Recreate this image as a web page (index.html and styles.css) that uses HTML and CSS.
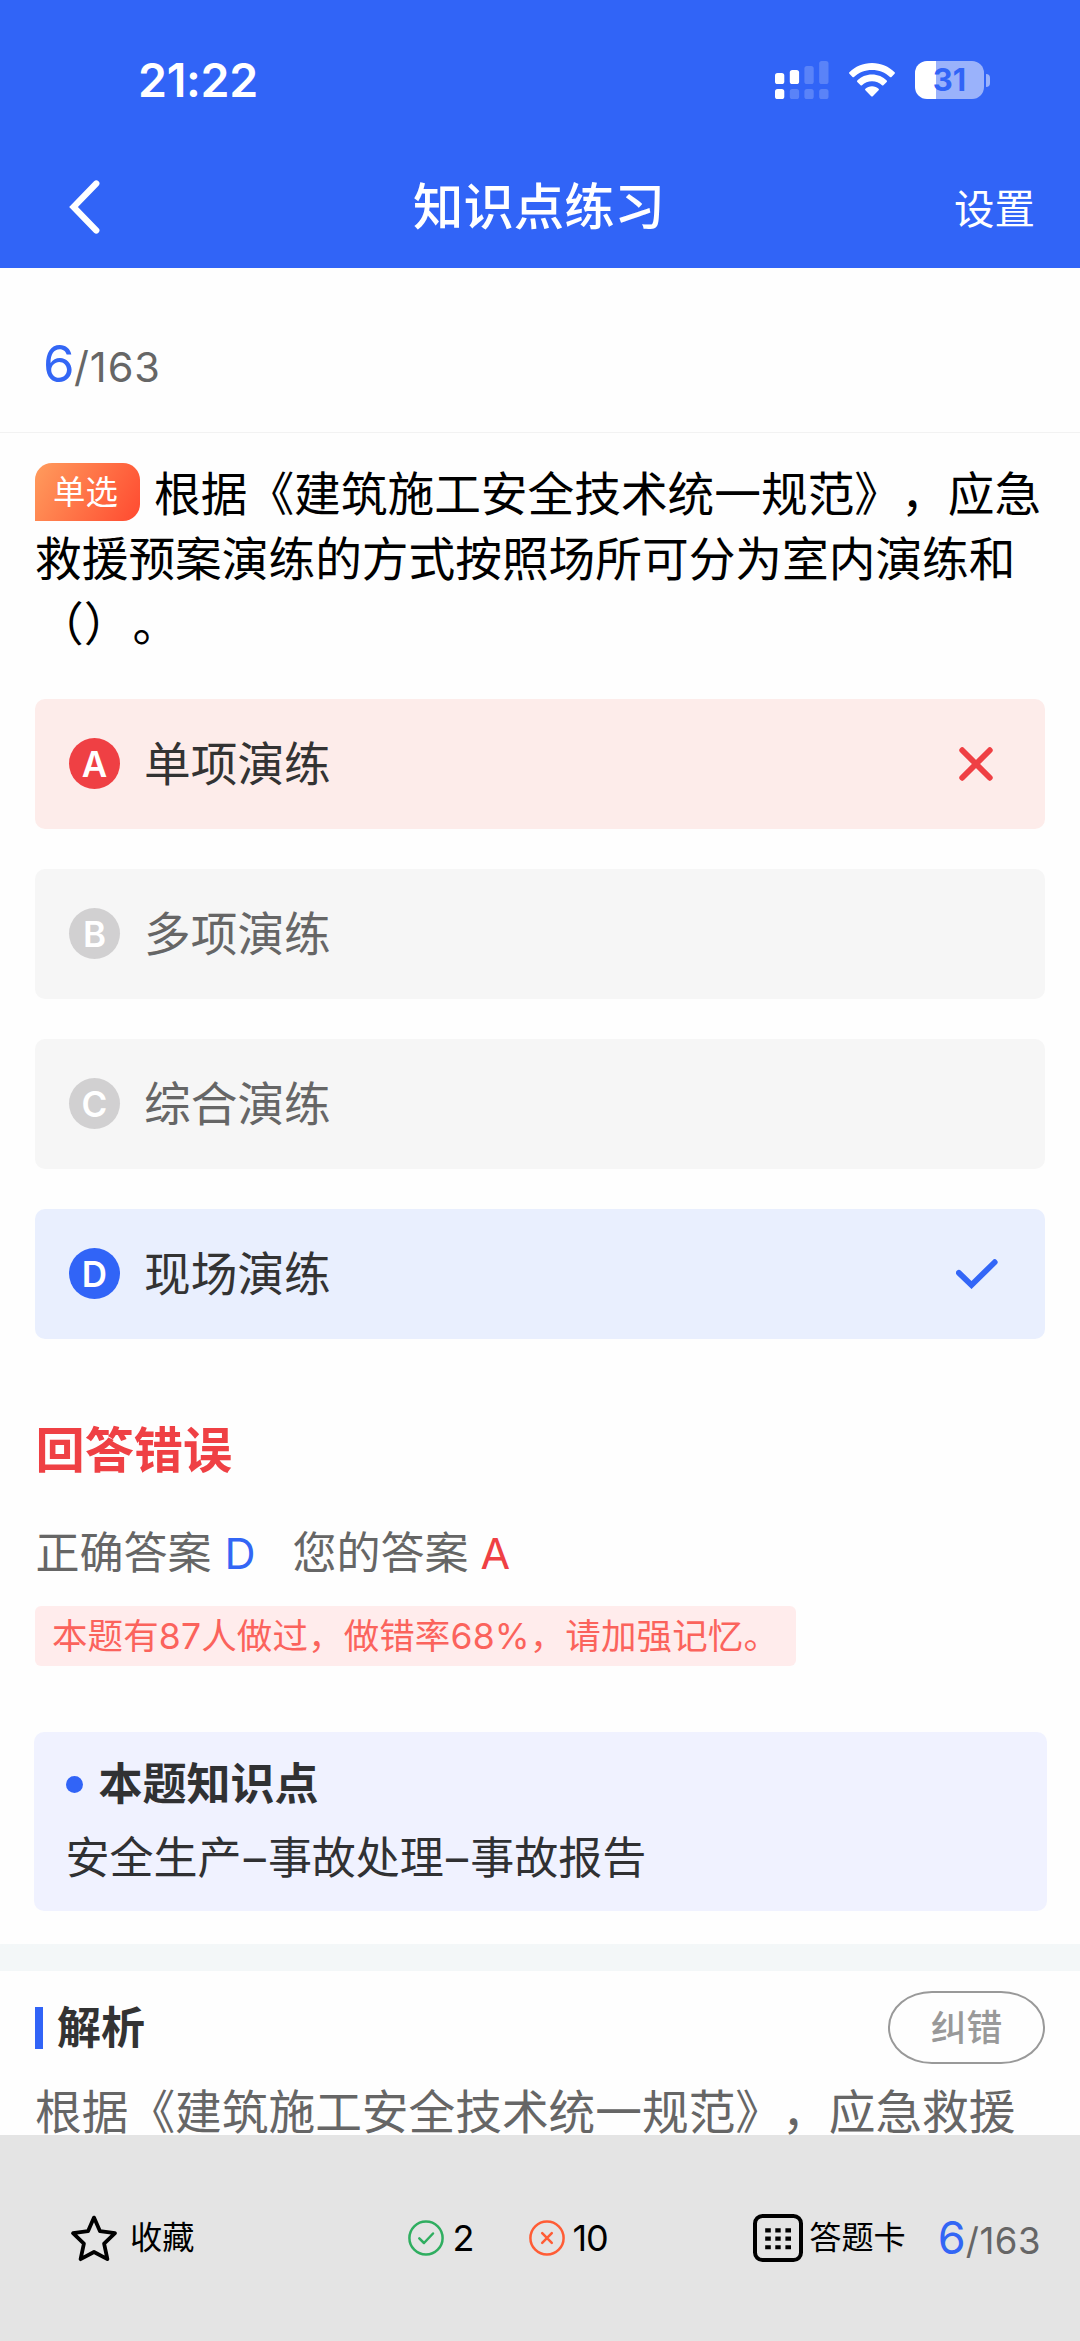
FILE: index.html
```html
<!DOCTYPE html>
<html lang="zh-CN">
<head>
<meta charset="utf-8">
<title>知识点练习</title>
<link rel="stylesheet" href="styles.css">
</head>
<body>
<div class="app">
  <header class="header">
    <div class="status">
      <span class="clock">21:22</span>
      <div class="status-icons">
        <svg class="signal" width="54" height="38" viewBox="0 0 54 38" fill="#fff">
          <rect x="0" y="12" width="9.3" height="11" rx="2.6"/>
          <rect x="14.8" y="9" width="9.3" height="14" rx="2.6"/>
          <g opacity=".2">
            <rect x="29.4" y="5" width="9.3" height="18" rx="2.6"/>
            <rect x="44.2" y="0" width="9.3" height="23" rx="2.6"/>
            <rect x="14.8" y="28" width="9.3" height="10" rx="2.6"/>
            <rect x="29.4" y="28" width="9.3" height="10" rx="2.6"/>
            <rect x="44.2" y="28" width="9.3" height="10" rx="2.6"/>
          </g>
          <rect x="0" y="28" width="9.3" height="10" rx="2.6"/>
        </svg>
        <svg class="wifi" width="46" height="34" viewBox="0 0 46 34" fill="#fff">
          <path d="M23 0C14 0 6 3.600.4 9.300Q-.3 10 .4 10.700L3.500 13.900Q4.200 14.600 5 13.900C9.700 9.500 16 6.900 23 6.900S36.300 9.500 41 13.900Q41.800 14.600 42.500 13.900L45.600 10.700Q46.300 10 45.600 9.300C40 3.600 32 0 23 0Z"/>
          <path d="M23 11.500C17.200 11.500 12 13.800 8.300 17.500Q7.600 18.200 8.300 18.900L11.600 22.200Q12.300 22.800 13 22.200C15.600 19.700 19.100 18.200 23 18.200S30.400 19.700 33 22.200Q33.700 22.800 34.400 22.200L37.700 18.900Q38.400 18.200 37.700 17.500C34 13.800 28.800 11.500 23 11.500Z"/>
          <path d="M23 23.200C20.400 23.200 18.100 24.200 16.400 25.700Q15.600 26.500 16.400 27.300L22.200 33.200Q23 34 23.800 33.200L29.600 27.300Q30.400 26.500 29.600 25.700C27.900 24.200 25.600 23.200 23 23.200Z"/>
        </svg>
        <div class="battery"><span class="battery-body">31</span><i class="battery-cap"></i></div>
      </div>
    </div>
    <nav class="nav">
      <svg class="back" width="32" height="54" viewBox="0 0 32 54" fill="none" stroke="#fff" stroke-width="6.200" stroke-linecap="round" stroke-linejoin="miter"><path d="M27.300 3.500 4.500 27l22.800 23.500"/></svg>
      <h1 class="title">知识点练习</h1>
      <span class="settings">设置</span>
    </nav>
  </header>

  <main class="content">
    <div class="progress"><b>6</b><span>/163</span></div>

    <section class="quiz">
      <p class="question"><span class="tag">单选</span>根据《建筑施工安全技术统一规范》，应急救援预案演练的方式按照场所可分为室内演练和<span class="blank">（）</span>。</p>
      <ul class="options">
        <li class="option wrong"><span class="letter">A</span><span class="label">单项演练</span>
          <svg class="mark-x" width="34" height="34" viewBox="0 0 34 34" fill="none" stroke="#ef4044" stroke-width="5.800" stroke-linecap="round"><path d="M3.200 3.200 30.800 30.800M30.800 3.200 3.200 30.800"/></svg>
        </li>
        <li class="option"><span class="letter">B</span><span class="label">多项演练</span></li>
        <li class="option"><span class="letter">C</span><span class="label">综合演练</span></li>
        <li class="option right"><span class="letter">D</span><span class="label">现场演练</span>
          <svg class="mark-v" width="42" height="30" viewBox="0 0 42 30" fill="none" stroke="#3366f7" stroke-width="5.800" stroke-linecap="round"><path d="M2.900 13.800 15.500 26 38.700 3.200"/></svg>
        </li>
      </ul>
    </section>

    <section class="result">
      <h2 class="verdict">回答错误</h2>
      <p class="answers"><span>正确答案</span><span class="ans good">D</span><span class="yours">您的答案</span><span class="ans bad">A</span></p>
      <p class="tip">本题有87人做过，做错率68%，请加强记忆。</p>
      <div class="knowledge">
        <h3 class="knowledge-title"><i class="dot"></i>本题知识点</h3>
        <p class="knowledge-path">安全生产<span class="dash">–</span>事故处理<span class="dash">–</span>事故报告</p>
      </div>
    </section>

    <section class="analysis">
      <div class="analysis-head">
        <h3 class="analysis-title">解析</h3>
        <span class="report">纠错</span>
      </div>
      <p class="analysis-text">根据《建筑施工安全技术统一规范》，应急救援</p>
    </section>
  </main>

  <footer class="footer">
    <div class="fav">
      <svg width="48" height="48" viewBox="0 0 48 48" fill="none" stroke="#000" stroke-width="3.800" stroke-linejoin="round"><path d="M24 3.600 30 17.200 45 19.200 34.100 29.700 37.400 45.200 24 38 10.600 45.200 13.900 29.700 3 19.200 18 17.200Z"/></svg>
      <span>收藏</span>
    </div>
    <div class="counts">
      <svg width="36" height="36" viewBox="0 0 36 36" fill="none" stroke="#2fae60" stroke-width="2.500" stroke-linecap="round" stroke-linejoin="round"><circle cx="18" cy="18" r="16.600"/><path d="M11.300 18.300 16 23 25 13.500"/></svg>
      <span class="count-ok">2</span>
      <svg width="36" height="36" viewBox="0 0 36 36" fill="none" stroke="#ff5c35" stroke-width="2.500" stroke-linecap="round"><circle cx="18" cy="18" r="16.600"/><path d="M13.200 13.200 22.800 22.800M22.800 13.200 13.200 22.800"/></svg>
      <span class="count-bad">10</span>
    </div>
    <div class="sheet">
      <svg width="50" height="48" viewBox="0 0 50 48"><rect x="2" y="2" width="46" height="44" rx="7.500" fill="none" stroke="#000" stroke-width="4"/><path d="M12.200 14.200h5.600v4.300h-5.600zM22.300 14.200h5.400v4.300h-5.400zM32.400 14.200H38v4.300h-5.600zM12.200 22.600h5.600v4.100h-5.600zM22.300 22.600h5.400v4.100h-5.400zM32.400 22.600H38v4.100h-5.600zM12.200 31.200h5.600v4.100h-5.600zM22.300 31.200h5.400v4.100h-5.400zM32.400 31.200H38v4.100h-5.600z"/></svg>
      <span>答题卡</span>
    </div>
    <div class="progress small"><b>6</b><span>/163</span></div>
  </footer>
</div>
</body>
</html>
```
FILE: styles.css
```css
* { box-sizing: border-box; margin: 0; padding: 0; }

body {
  width: 1080px;
  font-family: "Inter", "Noto Sans CJK SC", sans-serif;
  text-spacing-trim: space-all;
  color: #000;
  background: #fefefe;
}

.app {
  display: flex;
  flex-direction: column;
  height: 2341px;
  overflow: hidden;
}

svg { display: block; flex: none; }

/* Header */
.header {
  flex: none;
  height: 268px;
  background: #3164f7;
  color: #fff;
}

.status {
  display: flex;
  justify-content: space-between;
  align-items: center;
  height: 160px;
  padding: 0 90px 0 138px;
}

.clock { font-size: 46.500px; font-weight: 600; letter-spacing: -.3px; }

.status-icons { display: flex; align-items: center; }
.wifi { margin-left: 20px; }

.battery { display: flex; align-items: center; margin-left: 20px; }

.battery-body {
  width: 69px;
  height: 38px;
  border-radius: 12px;
  background: linear-gradient(to right, #fff 21.500px, #9ab2fb 21.500px);
  color: #3164f7;
  font-size: 31px;
  font-weight: 700;
  line-height: 38px;
  text-align: center;
}

.battery-cap {
  width: 4px;
  height: 13px;
  margin-left: 2px;
  border-radius: 0 5px 5px 0;
  background: #9ab2fb;
}

.nav {
  display: grid;
  grid-template-columns: 1fr auto 1fr;
  align-items: center;
  height: 94px;
  padding: 0 45px 0 43px;
}

.back { margin-left: 26px; }
.title { font-size: 50.400px; font-weight: 500; line-height: 60px; }
.settings { justify-self: end; font-size: 40.500px; line-height: 50px; padding-top: 5px; }

/* Scrolling body */
.content { flex: 1; min-height: 0; overflow: hidden; }

.progress { display: flex; align-items: baseline; color: #666; }
.progress b { width: 31px; color: #3366f5; font-weight: 400; font-size: 51px; line-height: 60px; }
.progress span { font-size: 41.500px; letter-spacing: .9px; }

.content .progress {
  height: 165px;
  padding: 66px 0 0 43px;
  border-bottom: 1px solid #f2f2f2;
}

.quiz { padding: 29px 35px 0; }

.question { font-size: 46.700px; line-height: 65.200px; }

.tag {
  display: inline-block;
  height: 58px;
  width: 105px;
  margin: -6px 14px 6px 0;
  padding-right: 4px;
  border-radius: 17px 17px 17px 0;
  background: linear-gradient(120deg, #ff9c5d, #ff4a30);
  color: #fff;
  font-size: 32.400px;
  line-height: 59px;
  text-align: center;
  vertical-align: middle;
}

.blank { margin: 0 2px; }

.options {
  display: grid;
  gap: 39.500px;
  margin-top: 41px;
  list-style: none;
}

.option {
  display: flex;
  align-items: center;
  height: 130.500px;
  padding: 0 34px;
  border-radius: 10px;
  background: #f6f6f6;
  color: #666;
  font-size: 46.700px;
}

.letter {
  width: 51px;
  height: 51px;
  margin-right: 24px;
  border-radius: 50%;
  background: #d1d0d1;
  color: #fff;
  font-size: 35px;
  font-weight: 600;
  line-height: 52px;
  text-align: center;
}

.label { flex: 1; line-height: 60px; }
.option.wrong { background: #fdecea; color: #333; }
.option.wrong .letter { background: #ef4044; }
.option.right { background: #e9effe; color: #333; }
.option.right .letter { background: #3164f7; }
.mark-x { margin-right: 18px; }
.mark-v { margin-right: 13px; }

/* Result */
.result { padding: 81px 33.500px 33px; border-bottom: 27px solid #f3f7f8; }

.verdict {
  padding-left: 2px;
  color: #ef4044;
  font-size: 49.200px;
  font-weight: 700;
  line-height: 60px;
}

.answers {
  display: flex;
  margin-top: 43px;
  padding-left: 2px;
  color: #666;
  font-size: 44px;
  line-height: 60px;
}

.ans { margin-left: 12px; font-size: 43px; }
.good { width: 36px; padding-left: 1px; color: #3366f5; }
.yours { margin-left: 33px; }
.bad { color: #ef4044; }

.tip {
  width: 761px;
  height: 60px;
  margin: 23px 0 0 1.500px;
  padding-left: 17px;
  border-radius: 6px;
  background: #ffecec;
  color: #fb635c;
  font-size: 35.500px;
  letter-spacing: .12px;
  line-height: 61px;
  white-space: nowrap;
}

.knowledge {
  height: 179px;
  margin-top: 66px;
  padding: 22px 32px 0;
  border-radius: 10px;
  background: #f0f2ff;
  color: #303133;
}

.knowledge-title {
  display: flex;
  align-items: center;
  font-size: 44px;
  font-weight: 700;
  line-height: 60px;
}

.dot {
  width: 17px;
  height: 17px;
  margin-right: 16px;
  border-radius: 50%;
  background: #3164f7;
}

.knowledge-path { margin-top: 14px; font-size: 44px; line-height: 60px; }
.dash { margin: 0 2.200px; }

/* Analysis */
.analysis { padding: 20px 35px 0; }

.analysis-head { display: flex; justify-content: space-between; align-items: center; }

.analysis-title {
  padding-left: 14px;
  border-left: 8px solid #3164f7;
  color: #333;
  font-size: 44px;
  font-weight: 700;
  line-height: 42px;
}

.report {
  width: 157px;
  height: 73px;
  border: 2.500px solid #999;
  border-radius: 44px / 36px;
  color: #999;
  font-size: 35.800px;
  font-weight: 500;
  line-height: 70px;
  text-align: center;
}

.analysis-text { margin-top: 16px; color: #666; font-size: 46.700px; line-height: 65px; white-space: nowrap; }

/* Bottom toolbar */
.footer {
  flex: none;
  display: flex;
  align-items: center;
  height: 206px;
  padding: 0 39px 0 70px;
  background: #e4e4e4;
  font-size: 32.200px;
  line-height: 48px;
}

.fav, .counts, .sheet { display: flex; align-items: center; }
.fav span { margin-left: 12px; }
.counts { margin-left: 214px; font-size: 36px; }
.count-ok { width: 77px; margin-left: 8px; }
.count-bad { margin-left: 7px; letter-spacing: -1px; }
.sheet { margin-left: auto; }
.sheet span { margin-left: 6px; }
.small { margin-left: 32px; }
.small b { width: 28px; font-size: 45px; line-height: 52px; }
.small span { font-size: 36.500px; letter-spacing: .5px; }
```
